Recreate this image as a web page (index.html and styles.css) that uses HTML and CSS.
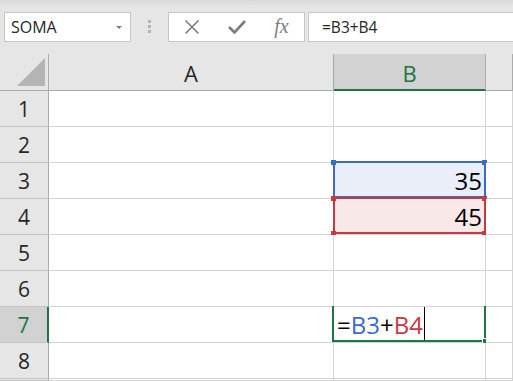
FILE: index.html
```html
<!DOCTYPE html>
<html>
<head>
<meta charset="utf-8">
<link rel="stylesheet" href="styles.css">
</head>
<body>
<div class="toolbar">
  <div class="namebox"><span>SOMA</span><span class="dd"></span></div>
  <div class="grip"><i></i><i></i><i></i></div>
  <div class="fbuttons">
    <div class="fbtn"><svg width="16" height="16" viewBox="0 0 16 16"><path d="M1.5 1.5 L14.5 14.5 M14.5 1.5 L1.5 14.5" stroke="#7d7d7d" stroke-width="1.6" fill="none"/></svg></div>
    <div class="fbtn"><svg width="18" height="14" viewBox="0 0 18 14"><path d="M1 7 L6.5 12.5 L17 1" stroke="#7d7d7d" stroke-width="2.6" fill="none"/></svg></div>
    <div class="fbtn fx">fx</div>
  </div>
  <div class="formula">=B3+B4</div>
</div>
<div class="sheet">
  <div class="hdr corner"><svg width="48" height="36" viewBox="0 0 48 36"><polygon points="45,4 45,32 17,32" fill="#b4b4b4"/></svg></div>
  <div class="hdr col">A</div>
  <div class="hdr col sel">B</div>
  <div class="hdr col"></div>

  <div class="hdr row">1</div><div class="cell"></div><div class="cell"></div><div class="cell"></div>
  <div class="hdr row">2</div><div class="cell"></div><div class="cell"></div><div class="cell"></div>
  <div class="hdr row">3</div><div class="cell"></div><div class="cell num blue-fill">35<span class="hl blue"><i class="h tl"></i><i class="h tr"></i></span></div><div class="cell"></div>
  <div class="hdr row">4</div><div class="cell"></div><div class="cell num red-fill">45<span class="hl red"><i class="h tl"></i><i class="h tr"></i><i class="h bl"></i><i class="h br"></i></span></div><div class="cell"></div>
  <div class="hdr row">5</div><div class="cell"></div><div class="cell"></div><div class="cell"></div>
  <div class="hdr row">6</div><div class="cell"></div><div class="cell"></div><div class="cell"></div>
  <div class="hdr row sel">7</div><div class="cell"></div><div class="cell edit">=<span class="tb">B3</span>+<span class="tr">B4</span><span class="caret"></span><span class="active"><i class="fill"></i></span></div><div class="cell"></div>
  <div class="hdr row">8</div><div class="cell"></div><div class="cell"></div><div class="cell"></div>
  <div class="hdr row"></div><div class="cell"></div><div class="cell"></div><div class="cell"></div>
</div>
</body>
</html>
```
FILE: styles.css
```css
* { box-sizing: border-box; }
body {
  margin: 0;
  width: 513px;
  height: 381px;
  overflow: hidden;
  background: #e6e6e6;
  font-family: "Open Sans", sans-serif;
}
.toolbar {
  height: 54px;
  display: flex;
  align-items: flex-start;
  padding: 12px 0 0 4px;
  background: linear-gradient(#d8d8d8, #e6e6e6 6px);
}
.namebox {
  width: 127px;
  height: 30px;
  background: #fff;
  border: 1px solid #c6c6c6;
  display: flex;
  align-items: center;
  justify-content: space-between;
  padding: 0 8px 0 6px;
  font-size: 16px;
  line-height: 28px;
  color: #262626;
}
.dd {
  width: 0;
  height: 0;
  border-left: 3.5px solid transparent;
  border-right: 3.5px solid transparent;
  border-top: 3.5px solid #7a7a7a;
}
.grip {
  margin-left: 17px;
  padding-top: 8px;
  display: flex;
  flex-direction: column;
  gap: 2px;
}
.grip i {
  display: block;
  width: 3px;
  height: 3px;
  background: #b4b4b4;
}
.fbuttons {
  margin-left: 17px;
  width: 137px;
  height: 30px;
  background: #fff;
  border: 1px solid #c6c6c6;
  display: flex;
}
.fbtn {
  width: 45px;
  display: flex;
  align-items: center;
  justify-content: center;
}
.fbtn svg { display: block; }
.fx {
  font-family: "Liberation Serif", serif;
  font-style: italic;
  font-size: 20px;
  color: #7d7d7d;
  padding-bottom: 2px;
}
.formula {
  flex: 1;
  margin-left: 3px;
  margin-right: -2px;
  height: 30px;
  background: #fff;
  border: 1px solid #c6c6c6;
  padding-left: 13px;
  font-size: 15.5px;
  line-height: 28px;
  color: #262626;
}
.sheet {
  display: grid;
  grid-template-columns: 49px 285px 152px 1fr;
  grid-template-rows: 37px repeat(8, 36px) 2px;
}
.hdr {
  background: #e6e6e6;
  border-right: 1px solid #ababab;
  border-bottom: 1px solid #ababab;
  color: #262626;
  text-align: center;
}
.corner svg { display: block; }
.col {
  font-size: 22px;
  padding-top: 2px;
  line-height: 34px;
}
.col.sel {
  background: #d2d2d2;
  color: #217346;
  border-bottom: 2px solid #217346;
}
.row {
  font-size: 21px;
  padding-top: 1px;
  line-height: 34px;
  border-bottom-color: #c4c4c4;
}
.row.sel {
  background: #d2d2d2;
  color: #217346;
  border-right: 2px solid #217346;
}
.cell {
  position: relative;
  background: #fff;
  border-right: 1px solid #d4d4d4;
  border-bottom: 1px solid #d4d4d4;
  font-size: 24px;
  line-height: 35px;
  color: #000;
}
.num {
  text-align: right;
  padding-right: 3px;
}
.blue-fill { background: #e9eef8; }
.red-fill { background: #f9e8e8; }
.hl {
  position: absolute;
  left: -1px;
  right: -1px;
  top: -2px;
  bottom: 0;
  border: 2px solid;
}
.hl.blue { border-color: #3a6bc9; }
.hl.red { border-color: #c33a3f; }
.h {
  position: absolute;
  width: 5px;
  height: 5px;
}
.blue .h { background: #3a6bc9; }
.red .h { background: #c33a3f; }
.h.tl { left: -4px; top: -3px; }
.h.tr { right: -3px; top: -3px; }
.h.bl { left: -4px; bottom: -4px; }
.h.br { right: -3px; bottom: -4px; }
.edit {
  padding-left: 3px;
  white-space: nowrap;
}
.tb { color: #3a6bc9; }
.tr { color: #c33a3f; }
.caret {
  display: inline-block;
  width: 1px;
  height: 34px;
  background: #000;
  vertical-align: top;
  margin-left: 1px;
}
.active {
  position: absolute;
  left: -2px;
  right: -1px;
  top: -1px;
  bottom: 0;
  border: 2px solid #217346;
  border-top: none;
}
.fill {
  position: absolute;
  right: -3px;
  bottom: -3px;
  width: 5px;
  height: 5px;
  background: #217346;
  border-left: 1px solid #fff;
  border-top: 1px solid #fff;
}
```
